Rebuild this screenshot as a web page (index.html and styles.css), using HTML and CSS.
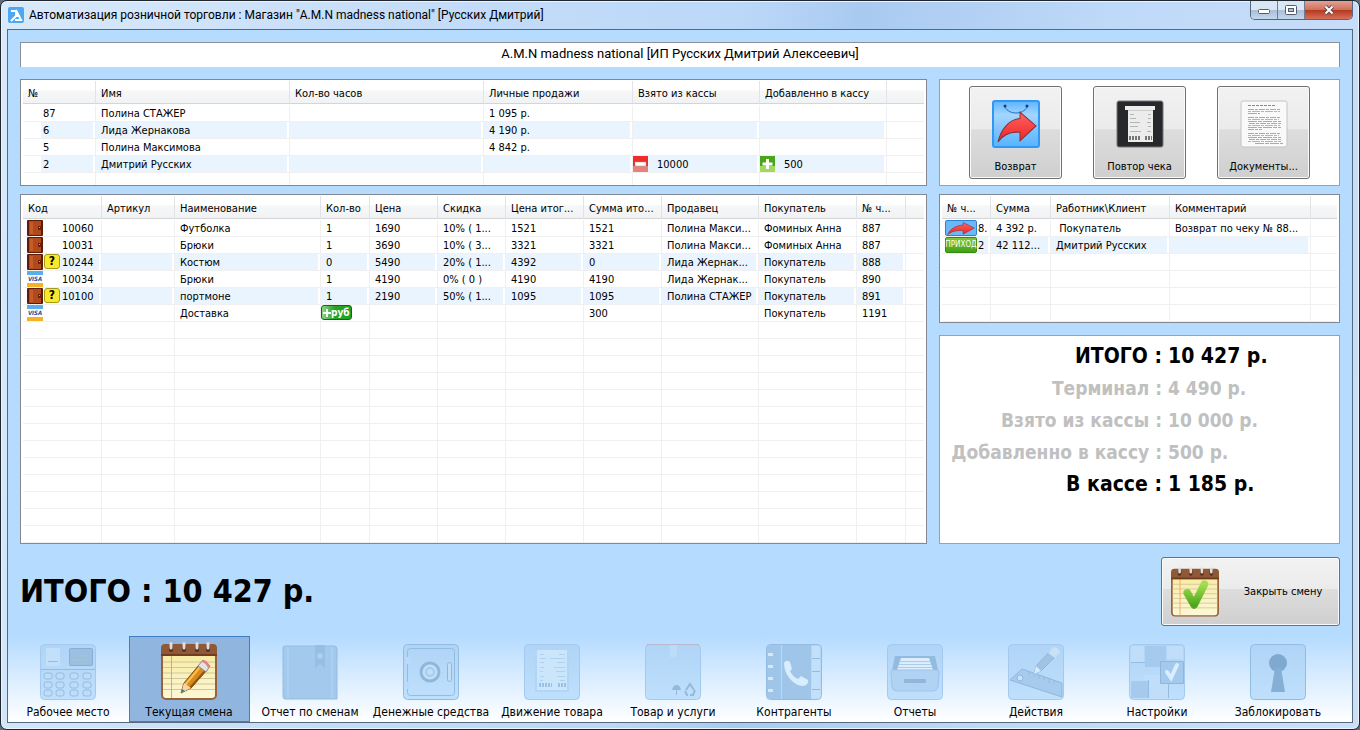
FILE: index.html
```
<!DOCTYPE html>
<html lang="ru">
<head>
    <meta charset="UTF-8">
    <meta name="viewport" content="width=device-width, initial-scale=1.0">
    <title>Автоматизация розничной торговли</title>
    <link rel="stylesheet" href="styles.css">
</head>
<body>
    <svg class="sprite" aria-hidden="true">
        <defs>
            <linearGradient id="g-paper" x1="0" y1="0" x2="0" y2="1">
                <stop offset="0" stop-color="#f8e99a"/><stop offset="1" stop-color="#fdf8d8"/>
            </linearGradient>
            <linearGradient id="g-check" x1="0" y1="0" x2="0" y2="1">
                <stop offset="0" stop-color="#a5dc50"/><stop offset="1" stop-color="#4ea81c"/>
            </linearGradient>
            <linearGradient id="g-bag" x1="0" y1="0" x2="0" y2="1">
                <stop offset="0" stop-color="#5db2ff"/><stop offset=".3" stop-color="#a3d6ff"/>
                <stop offset=".66" stop-color="#7cc2ff"/><stop offset="1" stop-color="#55b4ff"/>
            </linearGradient>
            <linearGradient id="g-red" x1="0" y1="0" x2="0" y2="1">
                <stop offset="0" stop-color="#ff6464"/><stop offset="1" stop-color="#f02222"/>
            </linearGradient>
            <linearGradient id="g-tile" x1="0" y1="0" x2="0" y2="1">
                <stop offset="0" stop-color="#b0d4f6"/><stop offset="1" stop-color="#bfe0fd"/>
            </linearGradient>
        </defs>
        <symbol id="notepad" viewBox="0 0 56 58">
            <rect x="1" y="4" width="54" height="53" rx="4" fill="url(#g-paper)" stroke="#9a6238" stroke-width="2"/>
            <path d="M2 20H54M2 25.500H54M2 31H54M2 36.500H54M2 42H54M2 47.500H54" stroke="#cdc79a" stroke-width="1"/>
            <path d="M10.500 14V56" stroke="#ff9c5a" stroke-width="1"/>
            <path d="M0 14V6a4 4 0 0 1 4-4H52a4 4 0 0 1 4 4V14Z" fill="#8f5836"/>
            <path d="M0 12H56V14H0Z" fill="#6f3d20"/>
            <path d="M10 8V5M23 8V5M36 8V5M47 8V5" stroke="#5a2e14" stroke-width="4" stroke-linecap="round"/>
            <path d="M10 6V1.500M23 6V1.500M36 6V1.500M47 6V1.500" stroke="#ddd" stroke-width="3" stroke-linecap="round"/>
        </symbol>
        <symbol id="return-arrow" viewBox="0 0 40 30" preserveAspectRatio="none">
            <path d="M1 29C4 17 12 8 23 7V1L39 14 23 28V20C14 19 7 21 1 29Z" fill="url(#g-red)" stroke="#8a3030" stroke-width="1"/>
        </symbol>
        <symbol id="wallet" viewBox="0 0 16 16">
            <rect width="16" height="16" rx="1" fill="#5c1c08"/>
            <rect x="2" y="1" width="12" height="14" fill="#b04a1c"/>
            <rect x="3" y="2" width="3" height="12" fill="#c65c28"/>
            <rect x="11" y="6" width="4" height="4" fill="#6e2108"/>
            <rect x="12" y="7" width="1" height="1" fill="#e8a03c"/>
        </symbol>
    </svg>

    <div class="window">
        <header class="titlebar">
            <svg class="app-icon" viewBox="0 0 16 16">
                <rect width="16" height="16" rx="2" fill="#4ba8f4"/>
                <path d="M3 4H8M8 3V9L3 14M8 9H12M8 3L13 13H7" fill="none" stroke="#fff" stroke-width="2"/>
            </svg>
            <h1>Автоматизация розничной торговли : Магазин "A.M.N madness national" [Русских Дмитрий]</h1>
            <div class="win-buttons">
                <button type="button" aria-label="Свернуть"><svg width="14" height="10"><rect x="1.500" y="4.500" width="11" height="4" rx="1" fill="#fff" stroke="#555b6b"/></svg></button>
                <button type="button" aria-label="Развернуть"><svg width="14" height="10"><rect x="1.500" y=".5" width="11" height="9" rx="1" fill="#fff" stroke="#555b6b"/><rect x="4.500" y="3.500" width="5" height="3" fill="#a9c1dc" stroke="#555b6b"/></svg></button>
                <button type="button" class="close" aria-label="Закрыть"><svg width="14" height="10"><path d="M3.500 1.500L10.500 8.500M10.500 1.500L3.500 8.500" stroke="#5a4a50" stroke-width="4"/><path d="M3.500 1.500L10.500 8.500M10.500 1.500L3.500 8.500" stroke="#fff" stroke-width="2"/></svg></button>
            </div>
        </header>

        <main class="client">
            <div class="shop-name">A.M.N madness national [ИП Русских Дмитрий Алексеевич]</div>

            <div class="columns top">
                <div class="list">
                    <table class="workers">
                        <colgroup><col class="w73"><col class="w194"><col class="w194"><col class="w149"><col class="w127"><col class="w127"><col></colgroup>
                        <thead>
                            <tr><th>№</th><th>Имя</th><th>Кол-во часов</th><th>Личные продажи</th><th>Взято из кассы</th><th>Добавленно в кассу</th><th></th></tr>
                        </thead>
                        <tbody>
                            <tr><td>87</td><td>Полина СТАЖЕР</td><td></td><td>1 095 р.</td><td></td><td></td><td></td></tr>
                            <tr class="odd"><td>6</td><td>Лида Жернакова</td><td></td><td>4 190 р.</td><td></td><td></td><td></td></tr>
                            <tr><td>5</td><td>Полина Максимова</td><td></td><td>4 842 р.</td><td></td><td></td><td></td></tr>
                            <tr class="odd"><td>2</td><td>Дмитрий Русских</td><td></td><td></td>
                                <td class="icon-cell"><span class="code money"><svg viewBox="0 0 16 16"><rect width="15" height="16" fill="#ee2c28"/><rect y="10" width="15" height="6" fill="#e5827a"/><rect x="2" y="6" width="11" height="4" fill="#fff" stroke="#b98" stroke-width=".5"/></svg>10000</span></td>
                                <td class="icon-cell"><span class="code money"><svg viewBox="0 0 16 16"><rect width="15" height="16" fill="#48a51c"/><rect y="10" width="15" height="6" fill="#a4d85a"/><path d="M7.500 3V13M2.500 8H12.500" stroke="#fff" stroke-width="3"/></svg>500</span></td><td></td></tr>
                        </tbody>
                    </table>
                </div>
                <div class="actions side">
                    <button type="button">
                        <svg viewBox="0 0 48 48">
                            <rect x="1" y="1" width="46" height="46" rx="2" fill="url(#g-bag)" stroke="#2f97f5" stroke-width="2"/>
                            <path d="M13 7C17 15 31 15 35 7" fill="none" stroke="#1b6fc0" stroke-width="1"/>
                            <circle cx="13" cy="6" r="1.500" fill="#0c3d80"/><circle cx="35" cy="6" r="1.500" fill="#0c3d80"/>
                            <use href="#return-arrow" x="5" y="11" width="40" height="32"/>
                        </svg>
                        Возврат
                    </button>
                    <button type="button">
                        <svg viewBox="0 0 48 48">
                            <rect x="1" y="1" width="46" height="46" rx="2" fill="#26282b" stroke="#777" stroke-width="1"/>
                            <path d="M9 6H39V10H37V42H12V10H9Z" fill="#ececec"/>
                            <path d="M12 10.500H37" stroke="#ccc"/>
                            <path d="M14 14.500H18M32 14.500H35M14 18.500H20M32 18.500H35M14 22.500H24M31 22.500H35M14 26.500H22M32 26.500H35M14 31.500H25M31 31.500H35" stroke="#b5b5b5"/>
                            <path d="M13 38H24M29 38H36" stroke="#777" stroke-width="4" stroke-dasharray="2 1"/>
                        </svg>
                        Повтор чека
                    </button>
                    <button type="button">
                        <svg viewBox="0 0 48 48">
                            <rect x="1" y="1" width="46" height="46" rx="2" fill="#f9f9f9" stroke="#c4c4c4" stroke-width="1"/>
                            <path d="M8 5.500H36" stroke="#888" stroke-dasharray="3 1"/>
                            <path d="M8 9.500H41M8 17.500H41M9 23.500H41M8 29.500H22M8 33.500H41M9 39.500H41" stroke="#aaa" stroke-dasharray="6 1 3 1"/>
                            <path d="M8 11.500H40M8 19.500H39M8 25.500H40M8 35.500H39M8 41.500H41" stroke="#b4b4b4" stroke-dasharray="3 1 8 1"/>
                            <path d="M8 13.500H20M8 21.500H41M8 27.500H41M8 37.500H41M15 43.500H43" stroke="#aaa" stroke-dasharray="9 1 4 1"/>
                        </svg>
                        Документы...
                    </button>
                </div>
            </div>

            <div class="columns middle">
                <div class="list">
                    <table class="sales">
                        <colgroup><col class="w79"><col class="w73"><col class="w146"><col class="w49"><col class="w68"><col class="w68"><col class="w78"><col class="w78"><col class="w97"><col class="w98"><col class="w49"><col></colgroup>
                        <thead>
                            <tr><th>Код</th><th>Артикул</th><th>Наименование</th><th>Кол-во</th><th>Цена</th><th>Скидка</th><th>Цена итог...</th><th>Сумма ито...</th><th>Продавец</th><th>Покупатель</th><th>№ ч...</th><th></th></tr>
                        </thead>
                        <tbody>
                            <tr><td class="icon-cell"><span class="code"><svg><use href="#wallet"/></svg><b></b>10060</span></td><td></td><td>Футболка</td><td>1</td><td>1690</td><td>10% ( 1...</td><td>1521</td><td>1521</td><td>Полина Макси...</td><td>Фоминых Анна</td><td>887</td><td></td></tr>
                            <tr><td class="icon-cell"><span class="code"><svg><use href="#wallet"/></svg><b></b>10031</span></td><td></td><td>Брюки</td><td>1</td><td>3690</td><td>10% ( 3...</td><td>3321</td><td>3321</td><td>Полина Макси...</td><td>Фоминых Анна</td><td>887</td><td></td></tr>
                            <tr class="odd"><td class="icon-cell"><span class="code"><svg><use href="#wallet"/></svg><b class="ask">?</b>10244</span></td><td></td><td>Костюм</td><td>0</td><td>5490</td><td>20% ( 1...</td><td>4392</td><td>0</td><td>Лида Жернак...</td><td>Покупатель</td><td>888</td><td></td></tr>
                            <tr><td class="icon-cell"><span class="code"><i class="visa">VISA</i><b></b>10034</span></td><td></td><td>Брюки</td><td>1</td><td>4190</td><td>0% ( 0 )</td><td>4190</td><td>4190</td><td>Лида Жернак...</td><td>Покупатель</td><td>890</td><td></td></tr>
                            <tr class="odd"><td class="icon-cell"><span class="code"><svg><use href="#wallet"/></svg><b class="ask">?</b>10100</span></td><td></td><td>портмоне</td><td>1</td><td>2190</td><td>50% ( 1...</td><td>1095</td><td>1095</td><td>Полина СТАЖЕР</td><td>Покупатель</td><td>891</td><td></td></tr>
                            <tr><td class="icon-cell"><span class="code"><i class="visa">VISA</i></span></td><td></td><td>Доставка</td><td class="icon-cell"><span class="rub"><svg viewBox="0 0 9 9"><path d="M4.500 0V9M0 4.500H9" stroke="#fff" stroke-width="2"/></svg>руб</span></td><td></td><td></td><td></td><td>300</td><td></td><td>Покупатель</td><td>1191</td><td></td></tr>
                        </tbody>
                    </table>
                </div>
                <div class="side stack">
                    <div class="list checks-list">
                        <table class="checks">
                            <colgroup><col class="w49"><col class="w60"><col class="w119"><col class="w141"><col></colgroup>
                            <thead>
                                <tr><th>№ ч...</th><th>Сумма</th><th>Работник\Клиент</th><th>Комментарий</th><th></th></tr>
                            </thead>
                            <tbody>
                                <tr><td class="icon-cell"><span class="code"><span class="kind back"><svg><use href="#return-arrow"/></svg></span>8.</span></td><td>4 392 р.</td><td>&nbsp;Покупатель</td><td>Возврат по чеку № 88...</td><td></td></tr>
                                <tr class="odd"><td class="icon-cell"><span class="code"><span class="kind income">ПРИХОД</span>2</span></td><td>42 112...</td><td>Дмитрий Русских</td><td></td><td></td></tr>
                            </tbody>
                        </table>
                    </div>
                    <dl class="summary">
                        <dt class="main">ИТОГО :</dt><dd class="main">10 427 р.</dd>
                        <dt>Терминал :</dt><dd>4 490 р.</dd>
                        <dt>Взято из кассы :</dt><dd>10 000 р.</dd>
                        <dt>Добавленно в кассу :</dt><dd>500 р.</dd>
                        <dt class="main">В кассе :</dt><dd class="main">1 185 р.</dd>
                    </dl>
                </div>
            </div>

            <div class="total-row">
                <div class="total">ИТОГО : 10 427 р.</div>
                <button type="button" class="close-shift">
                    <svg viewBox="0 0 56 58"><use href="#notepad"/><path d="M19 30L27 44L39 20" fill="none" stroke="url(#g-check)" stroke-width="9" stroke-linecap="round" stroke-linejoin="round"/></svg>
                    <span>Закрыть смену</span>
                </button>
            </div>

            <nav class="toolbar">
                <button type="button">
                    <svg viewBox="0 0 56 56">
                        <rect class="tile" x=".5" y=".5" width="55" height="55" rx="4"/>
                        <rect x="6" y="4" width="14" height="18" fill="#c3e0fa"/><path class="ln" d="M8 17.500H18"/>
                        <rect x="29.500" y="4.500" width="23" height="17" rx="1" fill="#9bbfe0" stroke="#86aed4"/>
                        <path d="M33 16H50M38 12H48" stroke="#9fd0b8" stroke-dasharray="2 2"/>
                        <path class="ln" d="M1 25.500H55"/>
                        <g class="key"><rect x="4" y="29" width="8" height="6" rx="2"/><rect x="16" y="29" width="8" height="6" rx="2"/><rect x="30" y="29" width="8" height="6" rx="2"/><rect x="43" y="29" width="8" height="6" rx="2"/><rect x="4" y="38" width="8" height="6" rx="2"/><rect x="16" y="38" width="8" height="6" rx="2"/><rect x="30" y="38" width="8" height="6" rx="2"/><rect x="43" y="38" width="8" height="6" rx="2"/><rect x="4" y="46" width="8" height="6" rx="2"/><rect x="16" y="46" width="8" height="6" rx="2"/><rect x="30" y="46" width="8" height="6" rx="2"/><rect x="43" y="46" width="8" height="6" rx="2"/></g>
                    </svg>
                    Рабочее место
                </button>
                <button type="button" class="active">
                    <svg viewBox="0 0 56 58">
                        <use href="#notepad"/>
                        <path d="M20 51L23 41L38 23L45 29L30 46Z" fill="#d98a1c" stroke="#7b4a12"/>
                        <path d="M24 43L39 25" stroke="#f7c04c" stroke-width="2"/><path d="M29 46L44 29" stroke="#8f5412" stroke-width="2"/>
                        <path d="M20 51L23 41L30 46Z" fill="#f5d7a0"/><path d="M20 51L21 47L24 49Z" fill="#2c7cc4"/>
                        <path d="M37 24L42 18L49 24L45 30Z" fill="#e2e2e2" stroke="#888"/>
                        <path d="M42 18Q46 18 49 24L47 26Q45 21 41 20Z" fill="#e88080"/>
                    </svg>
                    Текущая смена
                </button>
                <button type="button">
                    <svg viewBox="0 0 56 56">
                        <path d="M3 2H52Q55 2 55 5V55H3Q1 55 1 52V4Q1 2 3 2Z" fill="#a3c9ec" stroke="#94bce2"/>
                        <path d="M6 3V54M50 3V54" stroke="#abd0f1" stroke-width="2"/>
                        <path d="M33 1H43V24L38 20L33 24Z" fill="#97bfe3"/><circle cx="38" cy="12" r="3" fill="#acd0f0"/>
                    </svg>
                    Отчет по сменам
                </button>
                <button type="button">
                    <svg viewBox="0 0 56 56">
                        <rect class="tile dark" x=".5" y=".5" width="55" height="55" rx="4"/>
                        <rect class="ln" x="4.500" y="4.500" width="47" height="47" rx="3"/>
                        <circle cx="27" cy="28" r="9" fill="#c2dff8" stroke="#8fb7dc" stroke-width="3"/><circle cx="27" cy="28" r="4" fill="none" stroke="#a5cbee" stroke-width="2"/>
                        <rect x="44.500" y="18.500" width="4" height="19" rx="2" fill="#c2dff8" stroke="#8fb7dc"/>
                        <rect x="3" y="13" width="4" height="7" fill="#b9dafa"/><rect x="3" y="38" width="4" height="7" fill="#b9dafa"/>
                    </svg>
                    Денежные средства
                </button>
                <button type="button">
                    <svg viewBox="0 0 56 56">
                        <rect class="tile" x=".5" y=".5" width="55" height="55" rx="4"/>
                        <path d="M11 6H45V48H11Z" fill="#b0d5f6"/><path d="M13 6H43V46H13Z" fill="#cbe5fb"/>
                        <path d="M16 10.500H20M35 10.500H41M16 14.500H22M26 14.500H41M16 18.500H20M33 18.500H41M16 23.500H20M30 23.500H41M16 27.500H19M32 27.500H41M16 32.500H20M33 32.500H41M16 36.500H19M36 36.500H41" stroke="#aed2f2"/>
                        <path d="M15 41H28M34 41H42" stroke="#9cc1e4" stroke-width="4" stroke-dasharray="2 1"/>
                    </svg>
                    Движение товара
                </button>
                <button type="button">
                    <svg viewBox="0 0 56 56">
                        <rect class="tile" x=".5" y=".5" width="55" height="55" rx="4"/>
                        <path d="M2 .5H54" stroke="#b9b8cf"/><path d="M25 1H32V13H25Z" fill="#bddcf8"/>
                        <path d="M27 46Q28 41 31.500 41Q35 41 36 46Z" fill="#96b8d9"/><path d="M31.500 46V51" stroke="#96b8d9"/>
                        <path d="M41 46L45 40L49 46M50 46L48 51H45M43 51H42L40 47" fill="none" stroke="#96b8d9" stroke-width="2"/>
                    </svg>
                    Товар и услуги
                </button>
                <button type="button">
                    <svg viewBox="0 0 56 56">
                        <rect class="tile dark" x=".5" y=".5" width="55" height="55" rx="4"/>
                        <path d="M1 1H45V55H1Z" fill="#9fc5e8"/><path d="M15.500 1V55" stroke="#b9d9f6"/><path d="M46 2H54V54H46Z" fill="#c3e0fa"/><path class="ln" d="M46 14.500H54M46 27.500H54M46 45.500H54"/>
                        <path d="M2 10.500H7M2 22.500H7M2 34.500H7M2 46.500H7" stroke="#d5e9fb" stroke-width="3"/>
                        <path d="M18 19Q20 15 24 18L26 25L24 27Q26 32 32 35L35 32L42 36Q43 39 40 41Q34 44 26 37Q18 29 18 19Z" fill="#d9edfe"/>
                    </svg>
                    Контрагенты
                </button>
                <button type="button">
                    <svg viewBox="0 0 56 56">
                        <rect class="tile" x=".5" y=".5" width="55" height="55" rx="4"/>
                        <path d="M8 12H48L51 26H5Z" fill="#93bbdf"/><path d="M14 14H42L46 26H10Z" fill="#dceefd"/><path d="M13 17.500H43M12 20.500H44M11 23.500H45" stroke="#aacdec"/>
                        <path d="M6 26H50Q52 26 52 28L51 43Q50 47 46 47H10Q6 47 5 43L4 28Q4 26 6 26Z" fill="#b0d3f4" stroke="#9cc4e8"/>
                        <rect x="17" y="35" width="22" height="4" rx="1" fill="#90b6da"/>
                    </svg>
                    Отчеты
                </button>
                <button type="button">
                    <svg viewBox="0 0 56 56">
                        <rect class="tile" x=".5" y=".5" width="55" height="55" rx="4"/>
                        <path d="M14 25L54 39V53L2 36Z" fill="#a6cbed" stroke="#8fb7dc"/><circle cx="12" cy="34" r="3" fill="#c9e4fb" stroke="#8fb7dc"/>
                        <path class="ln" d="M21 28V31M26 30V33M31 31V35M36 33V36M41 35V39M46 37V40"/>
                        <path d="M26 30L28 22L44 5L50 10L33 27Z" fill="#9fc3e4" stroke="#8fb7dc"/><path d="M26 30L28 22L33 27Z" fill="#d6ebfd"/><path d="M40 9L45 3Q50 3 52 8L47 14Z" fill="#c9e0f5"/>
                    </svg>
                    Действия
                </button>
                <button type="button">
                    <svg viewBox="0 0 56 56">
                        <rect class="tile" x=".5" y=".5" width="55" height="55" rx="4"/>
                        <path d="M2 2H15V18H2ZM38 2H54V15H38ZM15 31H39V54H19V36H15Z" fill="#c0defa"/>
                        <path d="M16 2H37V23H16ZM2 37H19V54H2Z" fill="#a5caed"/>
                        <path d="M31.500 17.500H54.500V39.500H31.500Z" fill="#a3c9ed" stroke="#8fb7dc"/>
                        <path d="M38 28L42 34L48 21" fill="none" stroke="#dceefe" stroke-width="4" stroke-linecap="round"/>
                        <path class="ln" d="M2 18.500H16M19.500 54V36M39.500 40V54"/>
                    </svg>
                    Настройки
                </button>
                <button type="button">
                    <svg viewBox="0 0 56 56">
                        <rect class="tile dark" x=".5" y=".5" width="55" height="55" rx="4"/>
                        <circle cx="28" cy="19" r="9" fill="#7fa9d0"/><path d="M25 24H31L35 48H21Z" fill="#86afd5"/>
                    </svg>
                    Заблокировать
                </button>
            </nav>
        </main>
    </div>

    <script src="script.js"></script>
</body>
</html>
```
FILE: styles.css
```
* {
    box-sizing: border-box;
}
body {
    margin: 0;
    background: #5d6b7a;
    color: #000;
    font-family: "DejaVu Sans Condensed", Tahoma, sans-serif;
    font-size: 11px;
}
button {
    font: inherit;
    color: inherit;
    padding: 0;
    cursor: pointer;
}
.sprite {
    position: absolute;
    width: 0;
    height: 0;
}

/* window frame */
.window {
    display: flex;
    flex-direction: column;
    min-height: 100vh;
    padding: 0 6px 6px;
    border: 1px solid #20262e;
    border-radius: 7px;
    background: linear-gradient(100deg, #d9e9fa, #c4dcf8 30%, #bcd8f8 50%, #a9caf0 58%, #bfd9f8 75%, #cbdff8);
    box-shadow: inset 0 0 0 1px #eaf4fd;
}
.titlebar {
    display: flex;
    align-items: center;
    height: 28px;
    gap: 5px;
    padding-left: 1px;
}
.app-icon {
    width: 16px;
    height: 16px;
}
h1 {
    flex: 1;
    margin: 0;
    font-family: Roboto, "Segoe UI", sans-serif;
    font-size: 12px;
    font-weight: normal;
}
.win-buttons {
    display: flex;
    align-self: flex-start;
    height: 19px;
    border: 1px solid #56657a;
    border-top: 0;
    border-radius: 0 0 5px 5px;
    overflow: hidden;
}
.win-buttons button {
    display: flex;
    align-items: center;
    justify-content: center;
    width: 27px;
    border: 0;
    border-right: 1px solid #6d7d92;
    background: linear-gradient(#d9e6f4 48%, #a9bfd9 52%, #c3d7ec);
}
.win-buttons .close {
    width: 47px;
    border-right: 0;
    background: linear-gradient(#e3a193 , #d0705c 48%, #b53a20 52%, #d6705a);
}
.client {
    flex: 1;
    display: flex;
    flex-direction: column;
    border: 1px solid #566a7e;
    background: #b5dbff;
}

/* content */
.shop-name {
    height: 25px;
    margin: 12px;
    border: 1px solid #8a8f99;
    border-bottom: 0;
    background: #fff;
    font-family: Roboto, Tahoma, sans-serif;
    font-size: 13px;
    line-height: 22px;
    text-align: center;
}
.columns {
    display: flex;
    gap: 12px;
    margin: 0 12px 8px;
}
.top {
    height: 107px;
}
.middle {
    flex: 1;
    margin-bottom: 13px;
}
.side {
    width: 401px;
}
.stack {
    display: flex;
    flex-direction: column;
    gap: 12px;
}
/* the rows never stretch the list, they are clipped by it */
.list {
    flex: 1;
    contain: size;
    padding: 1px 2px;
    border: 1px solid #828790;
    background: #fff;
    overflow: hidden;
}
.checks-list {
    flex: none;
    height: 129px;
}

/* tables */
table {
    width: 100%;
    table-layout: fixed;
    border-collapse: separate;
    border-spacing: 0;
}
th, td {
    padding: 0 0 0 5px;
    overflow: hidden;
    white-space: nowrap;
    text-align: left;
    font-weight: normal;
}
th {
    height: 23px;
    padding-top: 2px;
    border-right: 1px solid #e2e3e6;
    border-bottom: 1px solid #d5d5d5;
    background: linear-gradient(#fff 40%, #f6f7f8 45%, #f1f2f4);
}
td {
    height: 17px;
    padding-top: 2px;
    border-right: 1px solid #f0f0f0;
    border-bottom: 1px solid #f0f0f0;
    line-height: 14px;
    vertical-align: top;
}
th:last-child, td:last-child {
    border-right: 0;
}
tbody::before {
    content: "";
    display: table-row;
    height: 1px;
}
.odd td {
    background: linear-gradient(#e9f4ff, #e9f4ff) no-repeat left top / calc(100% - 2px) 100%;
}
.odd td:last-child {
    background: none;
}
.odd td:first-child {
    background-size: 39px 100%;
    background-position: right 2px top;
}
.workers .odd td:first-child {
    background-size: 52px 100%;
}
.workers td:first-child {
    padding-left: 20px;
}
.checks .odd td:first-child {
    background-size: 12px 100%;
}
.w49 { width: 49px; }
.w60 { width: 60px; }
.w68 { width: 68px; }
.w73 { width: 73px; }
.w78 { width: 78px; }
.w79 { width: 79px; }
.w97 { width: 97px; }
.w98 { width: 98px; }
.w119 { width: 119px; }
.w127 { width: 127px; }
.w141 { width: 141px; }
.w146 { width: 146px; }
.w149 { width: 149px; }
.w194 { width: 194px; }

td.icon-cell {
    padding-top: 0;
    padding-left: 0;
}
.code {
    display: flex;
    gap: 1px;
    height: 16px;
    padding-left: 4px;
    line-height: 18px;
}
.money {
    gap: 8px;
    padding-left: 0;
}
.code svg, .visa {
    width: 16px;
    height: 16px;
}
.code b {
    width: 16px;
    margin-right: 1px;
    text-align: center;
}
.code .ask {
    height: 15px;
    border: 1px solid #a79a10;
    border-radius: 3px;
    background: #f7e92c;
    font-size: 12px;
    line-height: 13px;
}
.visa {
    border-top: 4px solid #5aaeea;
    border-bottom: 4px solid #f5b224;
    background: #fff;
    color: #1f4f9a;
    font-size: 6px;
    font-weight: bold;
    line-height: 8px;
    text-align: center;
}
.rub {
    display: flex;
    align-items: center;
    width: 31px;
    height: 15px;
    padding-left: 1px;
    border: 1px solid #0d6b12;
    border-radius: 3px;
    background: linear-gradient(90deg, #8fd08a, #22a322 45%);
    color: #fff;
    font-size: 10px;
    font-weight: bold;
    line-height: 12px;
}
.rub svg {
    width: 8px;
    height: 8px;
}
.checks .code {
    padding-left: 3px;
}
.kind {
    display: flex;
    align-items: center;
    justify-content: center;
    width: 32px;
    height: 16px;
    border-radius: 2px;
}
.back {
    border: 1px solid #2b82d0;
    background: #6bb8f8;
}
.back svg {
    width: 28px;
    height: 13px;
}
.income {
    border: 1px solid #2f8a10;
    background: linear-gradient(#7cc83a, #45a018);
    color: #fff;
    font-size: 8px;
}

/* push buttons */
.actions {
    display: flex;
    justify-content: center;
    align-items: center;
    gap: 31px;
    border: 1px solid #a0a0a0;
    background: #fff;
}
.actions button, .close-shift {
    border: 1px solid #707070;
    border-radius: 3px;
    background: linear-gradient(#f2f2f2, #ebebeb 46%, #dddddd 47%, #cfcfcf);
    box-shadow: inset 0 0 0 1px #fafafa;
}
.actions button {
    display: flex;
    flex-direction: column;
    align-items: center;
    gap: 12px;
    width: 93px;
    height: 93px;
    padding-top: 13px;
}
.actions svg {
    width: 48px;
    height: 48px;
}

.summary {
    flex: 1;
    display: grid;
    grid-template-columns: 222px 1fr;
    grid-auto-rows: 32px;
    column-gap: 6px;
    margin: 0;
    padding-top: 4px;
    border: 1px solid #a0a0a0;
    background: #fff;
    color: #c0c0c0;
    font-size: 19px;
    font-weight: bold;
    line-height: 32px;
    white-space: nowrap;
}
.summary dt {
    text-align: right;
}
.summary dd {
    margin: 0;
}
.summary .main {
    color: #000;
    font-size: 21px;
}

.total-row {
    display: flex;
    justify-content: space-between;
    margin: 0 12px 10px;
}
.total {
    font-size: 32px;
    font-weight: bold;
    line-height: 69px;
}
.close-shift {
    display: flex;
    align-items: center;
    width: 179px;
    height: 69px;
    padding-left: 9px;
}
.close-shift svg {
    width: 48px;
    height: 50px;
}
.close-shift span {
    flex: 1;
    padding-left: 8px;
}

/* bottom toolbar */
.toolbar {
    display: grid;
    grid-template-columns: repeat(11, 1fr);
    padding-right: 13px;
    background: linear-gradient(#b5dbff, #fff);
}
.toolbar button {
    display: flex;
    flex-direction: column;
    align-items: center;
    gap: 5px;
    height: 86px;
    padding-top: 7px;
    padding-right: 1px;
    border: 1px solid transparent;
    background: none;
    font-size: 12px;
    white-space: nowrap;
}
.toolbar svg {
    width: 56px;
    height: 56px;
}
.toolbar .active {
    padding-top: 5px;
    border-color: #3f80c4;
    background: #90b5de;
}
.toolbar .active svg {
    height: 58px;
}
.tile {
    fill: url(#g-tile);
    stroke: #a3caee;
}
.dark {
    stroke: #93bce2;
}
.ln {
    fill: none;
    stroke: #94bce1;
}
.key rect {
    fill: #bfddf8;
    stroke: #94bce1;
}
```
FILE: script.js
```
// fill every list with blank lines down to its bottom edge
document.querySelectorAll(".list").forEach(function (list) {
    const body = list.querySelector("tbody");
    const cols = list.querySelectorAll("th").length;
    while (list.querySelector("table").offsetHeight < list.clientHeight) {
        const row = body.insertRow();
        for (let i = 0; i < cols; i++) {
            row.insertCell();
        }
    }
});
```
